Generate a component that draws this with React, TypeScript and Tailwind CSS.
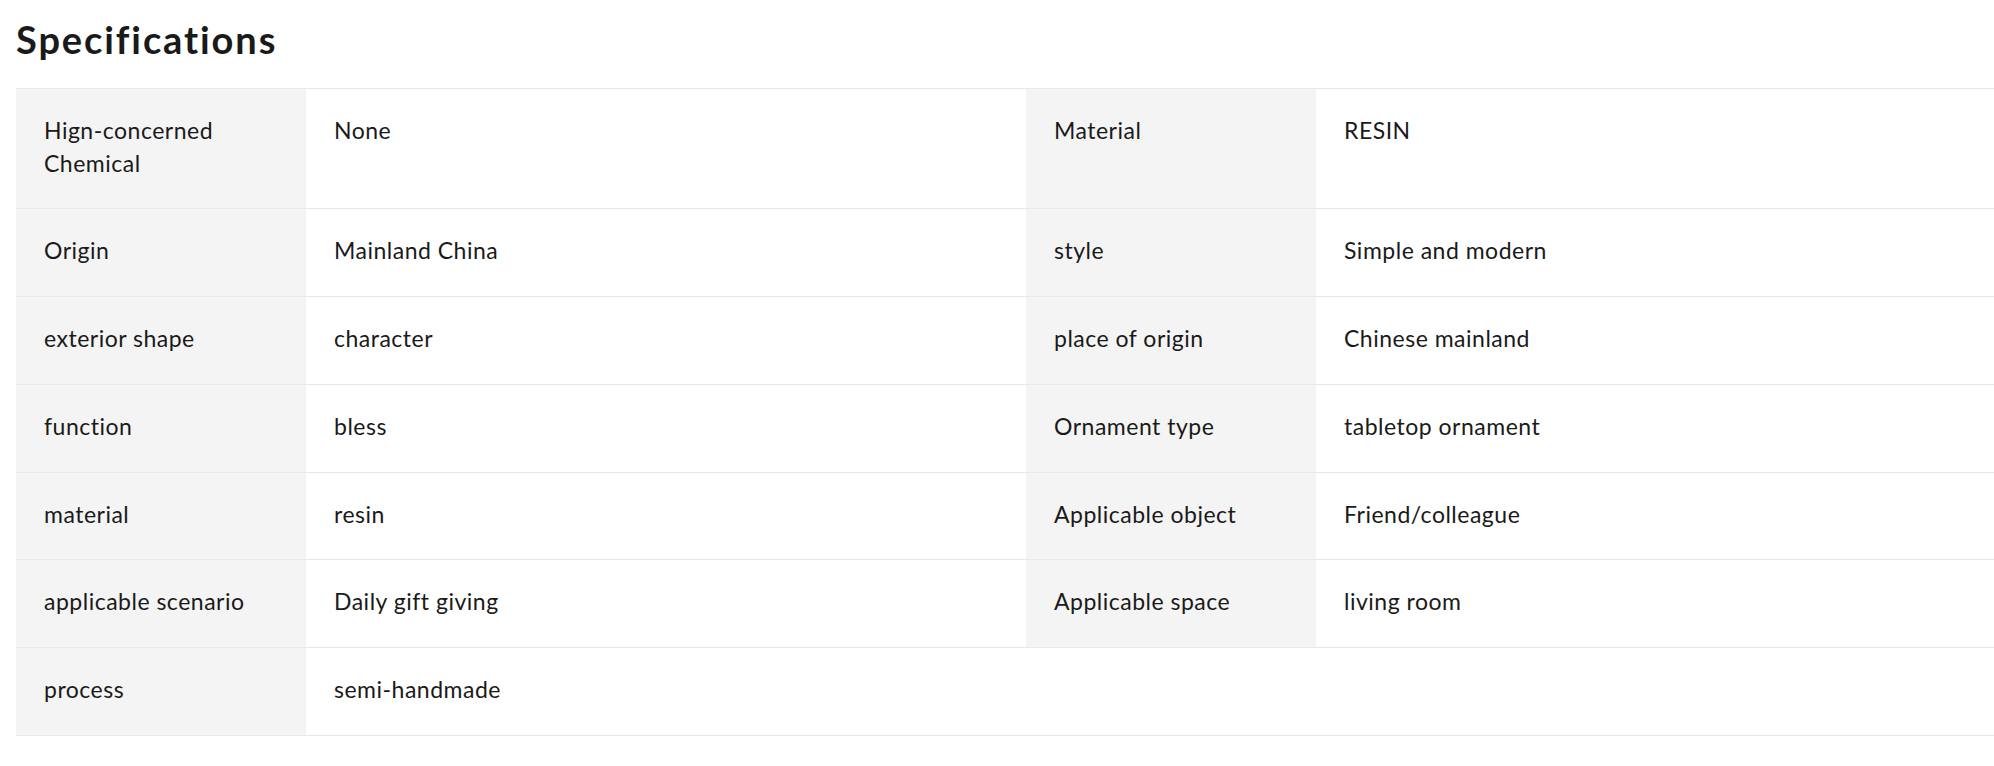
const specs: [string, string, string?, string?][] = [
  ["Hign-concerned Chemical", "None", "Material", "RESIN"],
  ["Origin", "Mainland China", "style", "Simple and modern"],
  ["exterior shape", "character", "place of origin", "Chinese mainland"],
  ["function", "bless", "Ornament type", "tabletop ornament"],
  ["material", "resin", "Applicable object", "Friend/colleague"],
  ["applicable scenario", "Daily gift giving", "Applicable space", "living room"],
  ["process", "semi-handmade"],
];

export default function App() {
  return (
    <div className="w-[1994px] h-[766px] overflow-hidden bg-white pl-4 text-[#1a1a1a] font-['Lato',sans-serif]">
      <h2 className="pt-[17px] pb-[27px] text-[38px] leading-[44px] font-bold tracking-[1.9px]">Specifications</h2>
      <div className="border-t border-[#e8e8e8]">
        {specs.map(([l1, v1, l2, v2], i) => (
          <div key={i} className="grid grid-cols-[290px_720px_290px_1fr] border-b border-[#e8e8e8] text-[23px] leading-[32.7px] tracking-[0.5px]">
            <div className="bg-[#f4f4f4] pl-[28px] pr-4 pt-[25px] pb-[29px]">{l1}</div>
            <div className="pl-[28px] pr-4 pt-[25px] pb-[29px]">{v1}</div>
            <div className={l2 ? "bg-[#f4f4f4] pl-[28px] pr-4 pt-[25px] pb-[29px]" : "pl-[28px] pr-4 pt-[25px] pb-[29px]"}>{l2}</div>
            <div className="pl-[28px] pr-4 pt-[25px] pb-[29px]">{v2}</div>
          </div>
        ))}
      </div>
    </div>
  );
}
